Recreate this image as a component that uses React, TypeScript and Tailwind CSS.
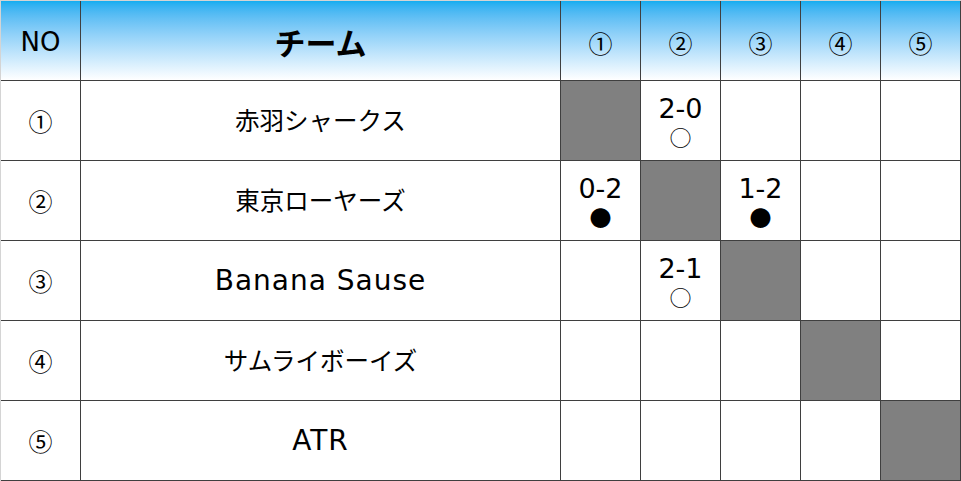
const teams: { name: string; latin: boolean }[] = [
  { name: '赤羽シャークス', latin: false },
  { name: '東京ローヤーズ', latin: false },
  { name: 'Banana Sause', latin: true },
  { name: 'サムライボーイズ', latin: false },
  { name: 'ATR', latin: true },
];
const nums = ['①', '②', '③', '④', '⑤'];

// results[row-col] -> [score, mark]
const results: Record<string, [string, string]> = {
  '0-1': ['2-0', '○'],
  '1-0': ['0-2', '●'],
  '1-2': ['1-2', '●'],
  '2-1': ['2-1', '○'],
};

const jp = { fontFamily: '"Noto Sans CJK JP", "Noto Sans", sans-serif' };
const latin = { fontFamily: '"DejaVu Sans", "Noto Sans CJK JP", sans-serif' };

export default function App() {
  return (
    <div className="w-[961px] h-[481px] bg-white text-black" style={jp}>
      <div className="bg-[#3f3f3f] border-t border-l border-[#d4d4d4] pr-px pb-px">
        <div className="grid grid-cols-[79px_479px_79px_79px_79px_79px_79px] grid-rows-[79px_79px_79px_79px_79px_79px] gap-px">
          {/* header */}
          <div className="flex items-center justify-center pt-1 bg-gradient-to-b from-[#10adf0] to-white text-[26px]" style={latin}>
            NO
          </div>
          <div className="flex items-center justify-center pt-1 bg-gradient-to-b from-[#10adf0] to-white text-[31px] font-bold">
            チーム
          </div>
          {nums.map((n) => (
            <div key={n} className="flex items-center justify-center pt-1 bg-gradient-to-b from-[#10adf0] to-white text-[24px]">
              {n}
            </div>
          ))}

          {/* rows */}
          {teams.map((t, r) => (
            <>
              <div key={'n' + r} className="flex items-center justify-center bg-white text-[24px]">
                {nums[r]}
              </div>
              <div
                key={'t' + r}
                className={
                  t.latin
                    ? 'flex items-center justify-center bg-white text-[28px] tracking-[1px]'
                    : 'flex items-center justify-center bg-white text-[24.5px]'
                }
                style={t.latin ? latin : jp}
              >
                {t.name}
              </div>
              {nums.map((_, c) => {
                if (r === c) return <div key={r + '-' + c} className="bg-[#808080]" />;
                const res = results[r + '-' + c];
                return (
                  <div key={r + '-' + c} className="flex flex-col items-center justify-center bg-white">
                    {res && (
                      <>
                        <span className="text-[27px] leading-[30px]" style={latin}>{res[0]}</span>
                        <span className="text-[22px] leading-[24px]">{res[1]}</span>
                      </>
                    )}
                  </div>
                );
              })}
            </>
          ))}
        </div>
      </div>
    </div>
  );
}
